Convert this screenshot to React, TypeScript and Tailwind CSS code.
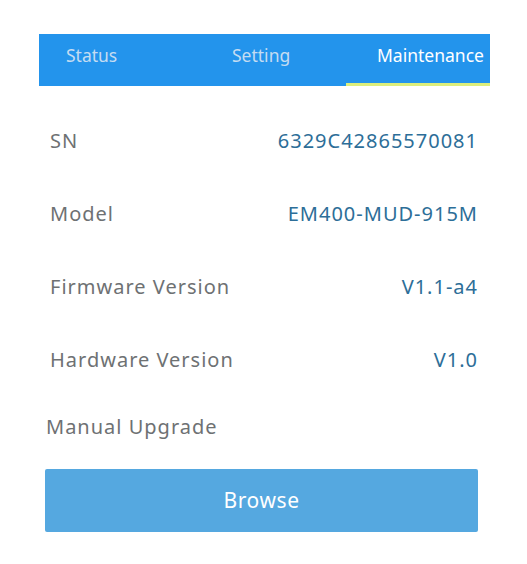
import React from "react";

const rows = [
  { label: "SN", value: "6329C42865570081" },
  { label: "Model", value: "EM400-MUD-915M" },
  { label: "Firmware Version", value: "V1.1-a4" },
  { label: "Hardware Version", value: "V1.0" },
];

export default function App() {
  return (
    <div
      className="w-[527px] h-[564px] bg-white pt-[34px]"
      style={{ fontFamily: "'Noto Sans', Roboto, sans-serif" }}
    >
      <div className="ml-[39px] w-[451px] h-[52px] bg-[#2394ec] flex text-[17.5px]">
        <div className="w-[154px] flex items-center pb-[10px] pl-[27px] text-[#c4dcf2]">Status</div>
        <div className="w-[153px] flex items-center pb-[10px] pl-[39px] text-[#c4dcf2]">Setting</div>
        <div className="flex-1 flex flex-col">
          <div className="flex-1 flex items-center pb-[7px] pl-[31px] text-white">Maintenance</div>
          <div className="h-[3px] bg-[#dcee7c]"></div>
        </div>
      </div>
      <div className="pt-[26px] pl-[50px] pr-[50px]">
        {rows.map((r) => (
          <div
            key={r.label}
            className="h-[73px] flex items-center justify-between text-[20px] tracking-[1px] pb-[16px]"
          >
            <span className="text-[#6e7173]">{r.label}</span>
            <span className="text-[#2d6e98] -mr-[1px]">{r.value}</span>
          </div>
        ))}
      </div>
      <div className="pl-[46px] text-[20px] tracking-[1px] text-[#6e7173] mt-[8px]">Manual Upgrade</div>
      <div className="ml-[45px] mt-[27px] w-[433px] h-[63px] bg-[#55a8e0] rounded-[2px] flex items-center justify-center text-white text-[21px] tracking-[0.6px]">
        Browse
      </div>
    </div>
  );
}
